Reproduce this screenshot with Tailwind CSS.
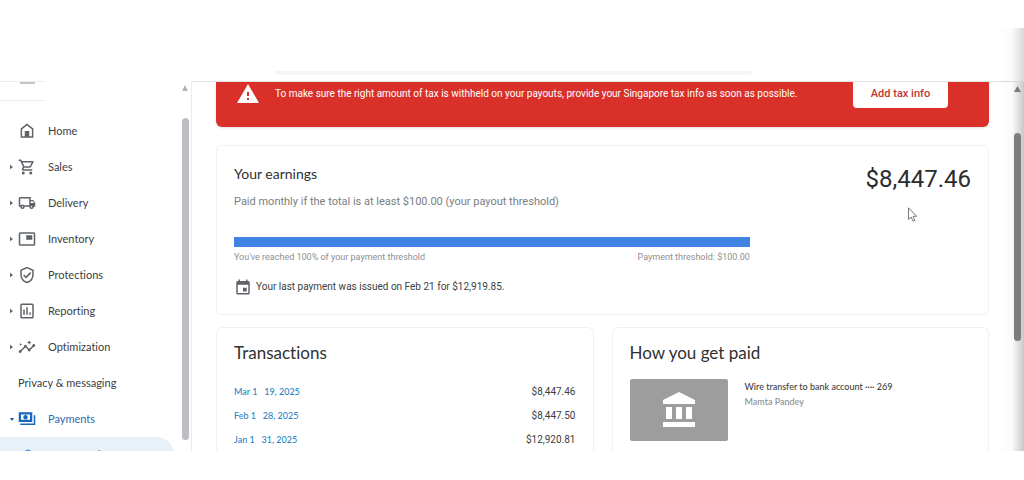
<!DOCTYPE html>
<html lang="en">

<head>
  <meta charset="UTF-8" />
  <meta name="viewport" content="width=device-width, initial-scale=1.0" />
  <title>Payments</title>
  <script src="https://cdn.jsdelivr.net/npm/@tailwindcss/browser@4"></script>
</head>

<body class="bg-white font-['Roboto','Liberation_Sans',sans-serif] text-[#3c4043] [font-variant-ligatures:none]">
  <div class="flex flex-col h-screen overflow-hidden">

    <!-- Header with the bottom edge of the search box -->
    <header class="flex shrink-0 h-[81px]">
      <div class="grow flex items-end pl-[275px] pr-[248px] pb-1.5">
        <div class="h-1 w-full rounded-b-sm bg-[#f3f5f6]"></div>
      </div>
      <div class="w-6 mt-7 bg-linear-to-r from-white via-[#fafafa] to-[#d8d8d8]"></div>
    </header>

    <div class="flex grow min-h-0">
      <!-- Sidebar -->
      <aside class="flex shrink-0 w-48 border-r border-[#ececee] overflow-hidden">
        <nav class="grow font-['Lato','Roboto',sans-serif] text-[11px]">
          <div class="w-[45px] h-5 pl-5 border-y border-[#e8eaed]">
            <div class="w-[15px] h-0.5 bg-[#c4c4c4]"></div>
          </div>
          <ul class="pt-3">
            <li>
              <a href="#" class="flex items-center h-9 pl-[18px]">
                <svg class="w-[18px] h-[18px] mr-3 fill-[#5f6368]" viewBox="0 0 24 24"><path fill-rule="evenodd" d="M12 2 3.500 8.500V21h17V8.500zm0 2.500 6.500 5V19h-13V9.500zM9 12h6v7H9z" /></svg>
                Home
              </a>
            </li>
            <li>
              <a href="#" class="flex items-center h-9 pl-[10px]">
                <svg class="w-[3px] h-1.5 mr-[5px] fill-[#5f6368]" viewBox="0 0 4 6"><path d="M0 0v6l4-3z" /></svg>
                <svg class="w-[18px] h-[18px] mr-3 fill-[#5f6368]" viewBox="0 0 24 24"><path d="M15.550 13c.75 0 1.410-.41 1.750-1.030l3.580-6.490A.996.996 0 0 0 20.010 4H5.210l-.94-2H1v2h2l3.600 7.590-1.350 2.440C4.520 15.370 5.480 17 7 17h12v-2H7l1.100-2zM6.160 6h12.150l-2.760 5H8.530zM7 18a2 2 0 1 0 0 4 2 2 0 0 0 0-4m10 0a2 2 0 1 0 0 4 2 2 0 0 0 0-4" /></svg>
                Sales
              </a>
            </li>
            <li>
              <a href="#" class="flex items-center h-9 pl-[10px]">
                <svg class="w-[3px] h-1.5 mr-[5px] fill-[#5f6368]" viewBox="0 0 4 6"><path d="M0 0v6l4-3z" /></svg>
                <svg class="w-[18px] h-[18px] mr-3 fill-[#5f6368]" viewBox="0 0 24 24"><path fill-rule="evenodd" d="M20 8h-3V4H3c-1.100 0-2 .9-2 2v11h2a3 3 0 0 0 6 0h6a3 3 0 0 0 6 0h2v-5zm-.5 1.500 1.960 2.500H17V9.500zM6 18a1 1 0 1 1 0-2 1 1 0 0 1 0 2m2.220-3c-.55-.61-1.330-1-2.220-1s-1.670.39-2.220 1H3V6h12v9zM18 18a1 1 0 1 1 0-2 1 1 0 0 1 0 2" /></svg>
                Delivery
              </a>
            </li>
            <li>
              <a href="#" class="flex items-center h-9 pl-[10px]">
                <svg class="w-[3px] h-1.5 mr-[5px] fill-[#5f6368]" viewBox="0 0 4 6"><path d="M0 0v6l4-3z" /></svg>
                <svg class="w-[18px] h-[18px] mr-3 fill-[#5f6368]" viewBox="0 0 24 24"><path fill-rule="evenodd" d="M3 3h18a2 2 0 0 1 2 2v14a2 2 0 0 1-2 2H3a2 2 0 0 1-2-2V5a2 2 0 0 1 2-2m0 2v14h18V5zm8 2h8v6h-8z" /></svg>
                Inventory
              </a>
            </li>
            <li>
              <a href="#" class="flex items-center h-9 pl-[10px]">
                <svg class="w-[3px] h-1.5 mr-[5px] fill-[#5f6368]" viewBox="0 0 4 6"><path d="M0 0v6l4-3z" /></svg>
                <svg class="w-[18px] h-[18px] mr-3 fill-none stroke-[#5f6368] stroke-2" viewBox="0 0 24 24"><path d="M12 2.200 20 5.700V11c0 5.200-3.400 9.600-8 11-4.600-1.400-8-5.800-8-11V5.700zM7.500 12l3.200 3.200 6.300-6.400" /></svg>
                Protections
              </a>
            </li>
            <li>
              <a href="#" class="flex items-center h-9 pl-[10px]">
                <svg class="w-[3px] h-1.5 mr-[5px] fill-[#5f6368]" viewBox="0 0 4 6"><path d="M0 0v6l4-3z" /></svg>
                <svg class="w-[18px] h-[18px] mr-3 fill-none stroke-[#5f6368] stroke-2" viewBox="0 0 24 24"><path d="M5 3h14a1 1 0 0 1 1 1v16a1 1 0 0 1-1 1H5a1 1 0 0 1-1-1V4a1 1 0 0 1 1-1zM8 10v7M12 7v10M16 14v3" /></svg>
                Reporting
              </a>
            </li>
            <li>
              <a href="#" class="flex items-center h-9 pl-[10px]">
                <svg class="w-[3px] h-1.5 mr-[5px] fill-[#5f6368]" viewBox="0 0 4 6"><path d="M0 0v6l4-3z" /></svg>
                <svg class="w-[18px] h-[18px] mr-3 fill-[#5f6368]" viewBox="0 0 24 24"><path d="M21 8c-1.450 0-2.260 1.440-1.930 2.510l-3.550 3.560c-.3-.09-.74-.09-1.040 0l-2.550-2.550C12.270 10.450 11.460 9 10 9c-1.450 0-2.270 1.440-1.930 2.520l-4.560 4.550C2.440 15.740 1 16.550 1 18c0 1.100.9 2 2 2 1.450 0 2.260-1.440 1.930-2.510l4.550-4.560c.3.090.74.090 1.040 0l2.550 2.550C12.730 16.550 13.540 18 15 18c1.450 0 2.270-1.440 1.930-2.520l3.560-3.550C21.560 12.260 23 11.450 23 10c0-1.100-.9-2-2-2M15 9l.94-2.070L18 6l-2.060-.93L15 3l-.92 2.070L12 6l2.080.93zM3.500 11 4 9l2-.5L4 8l-.5-2L3 8l-2 .5L3 9z" /></svg>
                Optimization
              </a>
            </li>
            <li>
              <a href="#" class="flex items-center h-9 pl-[18px]">Privacy &amp; messaging</a>
            </li>
            <li>
              <a href="#" class="flex items-center h-9 pl-[10px] text-[#2b6cb0]">
                <svg class="w-1 h-1 mr-1 fill-[#1a56a0]" viewBox="0 0 4 4"><path d="M0 1h4L2 4z" /></svg>
                <svg class="w-[18px] h-[18px] mr-3 fill-none stroke-[#1a66b8] stroke-2" viewBox="0 0 24 24"><path class="stroke-3" d="M2.500 4.500h15v10h-15z" /><circle cx="10" cy="9.500" r="2" fill="#1a66b8" /><path d="M22 7v12H3" /></svg>
                Payments
              </a>
            </li>
            <li>
              <a href="#" class="flex items-start h-9 pt-2.5 leading-4 w-[174px] pl-6 rounded-r-full bg-[#e8f0fa] text-[#2b7cd0]">
                <svg class="w-2 h-2 mt-0.5 mr-4 fill-none stroke-[#2b7cd0]" viewBox="0 0 8 8"><circle cx="4" cy="4" r="3" /></svg>
                Payments info
              </a>
            </li>
          </ul>
        </nav>
        <!-- Sidebar scrollbar -->
        <div class="flex flex-col items-center w-2 mr-0.5 pt-1">
          <svg class="w-1.5 h-1.5 fill-[#b4b4b8]" viewBox="0 0 6 6"><path d="M3 0 6 6H0z" /></svg>
          <div class="mt-[27px] mb-[11px] grow w-[7px] rounded-full bg-[#bdbdc4]"></div>
        </div>
      </aside>

      <main class="grow min-w-0 flex flex-col pl-6 pr-[11px] border-t border-[#e3e3e3] overflow-hidden">
        <!-- Tax alert -->
        <section class="flex items-start shrink-0 h-[45px] pl-5 pr-[41px] rounded-b-md bg-[#d93029] text-white shadow-sm">
          <svg class="shrink-0 w-6 h-6 fill-white" viewBox="0 0 24 24"><path fill-rule="evenodd" d="M12 2 1 21h22zm-1 8v4h2v-4zm0 6v2h2v-2z" /></svg>
          <p class="grow pl-[15px] text-[10px] leading-6 whitespace-nowrap">To make sure the right amount of tax is withheld on your payouts, provide your Singapore tax info as soon as possible.</p>
          <button type="button" class="shrink-0 w-[95px] h-[26px] pb-0.5 rounded-b-sm bg-white text-[11px] font-medium text-[#c5362f]">Add tax info</button>
        </section>

        <!-- Earnings -->
        <section class="shrink-0 mt-[18px] h-[170px] px-[17px] pt-[18px] border border-[#f1f1f2] rounded-md">
          <div class="flex justify-between">
            <div>
              <h2 class="font-['Lato','Roboto',sans-serif] text-sm leading-5 text-[#2f3033]">Your earnings</h2>
              <p class="mt-2 text-[11px] leading-5 text-[#7b7d80]">Paid monthly if the total is at least $100.00 (your payout threshold)</p>
            </div>
            <p class="text-2xl leading-[30px] text-[#2b2c2e]">$8,447.46</p>
          </div>
          <div class="w-[70%] mt-[25px]">
            <div class="h-[10px] bg-[#4083e2]"></div>
            <div class="flex justify-between text-[9px] leading-5 text-[#8d8f92]">
              <span>You've reached 100% of your payment threshold</span>
              <span>Payment threshold: $100.00</span>
            </div>
          </div>
          <p class="flex items-center mt-[10px] text-[10px] leading-5">
            <svg class="w-[18px] h-[18px] mr-1 fill-[#5f6368]" viewBox="0 0 24 24"><path fill-rule="evenodd" d="M19 4h-1V2h-2v2H8V2H6v2H5a2 2 0 0 0-2 2v14a2 2 0 0 0 2 2h14a2 2 0 0 0 2-2V6a2 2 0 0 0-2-2m0 16H5V9h14zm-7-7h5v5h-5z" /></svg>
            Your last payment was issued on Feb 21 for $12,919.85.
          </p>
        </section>

        <div class="grid grid-cols-2 gap-[18px] grow min-h-0 mt-3">
          <!-- Transactions -->
          <section class="px-[17px] pt-[15px] border border-b-0 border-[#f1f1f2] rounded-t-md overflow-hidden">
            <h2 class="font-['Lato','Roboto',sans-serif] text-[17px] leading-5 text-[#2f3033]">Transactions</h2>
            <table class="w-full mt-4 text-[10px]">
              <tr class="h-6">
                <td><a href="#" class="font-['Lato','Roboto',sans-serif] text-[9px] font-medium text-[#2a84c6]">Mar 1 &nbsp; 19, 2025</a></td>
                <td class="text-right">$8,447.46</td>
              </tr>
              <tr class="h-6">
                <td><a href="#" class="font-['Lato','Roboto',sans-serif] text-[9px] font-medium text-[#2a84c6]">Feb 1 &nbsp; 28, 2025</a></td>
                <td class="text-right">$8,447.50</td>
              </tr>
              <tr class="h-6">
                <td><a href="#" class="font-['Lato','Roboto',sans-serif] text-[9px] font-medium text-[#2a84c6]">Jan 1 &nbsp; 31, 2025</a></td>
                <td class="text-right">$12,920.81</td>
              </tr>
            </table>
          </section>

          <!-- Payment method -->
          <section class="px-[17px] pt-[15px] border border-b-0 border-[#f1f1f2] rounded-t-md overflow-hidden">
            <h2 class="font-['Lato','Roboto',sans-serif] text-[17px] leading-5 text-[#2f3033]">How you get paid</h2>
            <div class="flex mt-4">
              <div class="flex items-center justify-center w-[98px] h-[62px] rounded-xs bg-[#9d9d9d]">
                <svg class="w-8 h-9 fill-white" viewBox="0 0 32 36"><path d="M16 0 32 8v4H0V8zM3 15h6v12H3zM13 15h6v12h-6zM23 15h6v12h-6zM0 30h32v5H0z" /></svg>
              </div>
              <div class="pl-[17px] font-['Lato','Roboto',sans-serif] text-[9px] font-medium leading-[15px]">
                <p>Wire transfer to bank account ···· 269</p>
                <p class="text-[#8d8f92]">Mamta Pandey</p>
              </div>
            </div>
          </section>
        </div>
      </main>

      <!-- Page scrollbar -->
      <div class="flex flex-col items-end shrink-0 w-6 pt-1 pr-[3px] border-t border-[#dcdcdc] bg-linear-to-r from-white via-[#fafafa] to-[#c8c8c8]">
        <svg class="w-[7px] h-1.5 fill-[#7a7a7a]" viewBox="0 0 7 6"><path d="M3.500 0 7 6H0z" /></svg>
        <div class="mt-[41px] w-[7px] h-[57%] rounded-full bg-[#7c7c7c]"></div>
      </div>
    </div>

    <footer class="shrink-0 h-[29px]"></footer>
  </div>

  <!-- Mouse pointer -->
  <svg class="absolute top-[207px] right-[107px] w-[9px] h-[15px]" viewBox="0 0 9 15"><path d="M.5.8v11.700l2.700-2.500 1.800 4.200 1.900-.8-1.800-4.100h3.600z" fill="#fff" stroke="#77787c" /></svg>
</body>

</html>
